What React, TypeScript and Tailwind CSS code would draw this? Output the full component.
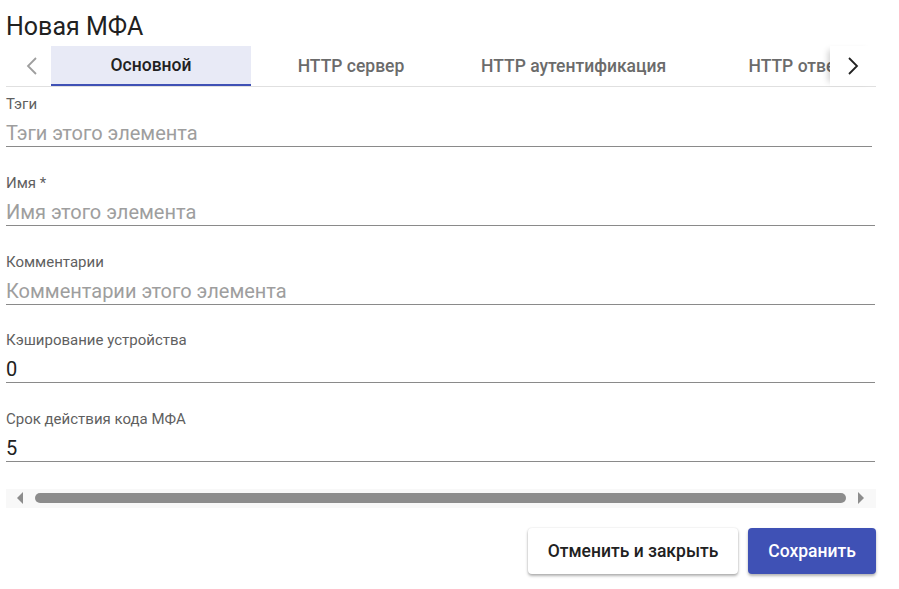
import React from "react";

const fields = [
  { label: "Тэги", placeholder: "Тэги этого элемента", value: "", w: "w-[866px]" },
  { label: "Имя *", placeholder: "Имя этого элемента", value: "", w: "w-[869px]" },
  { label: "Комментарии", placeholder: "Комментарии этого элемента", value: "", w: "w-[869px]" },
  { label: "Кэширование устройства", placeholder: "", value: "0", w: "w-[869px]" },
  { label: "Срок действия кода МФА", placeholder: "", value: "5", w: "w-[869px]" },
];

const tabs = ["Основной", "HTTP сервер", "HTTP аутентификация", "HTTP ответ"];

export default function App() {
  return (
    <div
      className="w-[899px] h-[589px] bg-white text-[#212121] overflow-hidden"
      style={{ fontFamily: "Roboto, 'Noto Sans', sans-serif" }}
    >
      <div className="pl-[6px] pr-[23px]">
        <h1 className="text-[25px] leading-[30px] pt-[12px] h-[46px] font-normal">Новая МФА</h1>

        <div className="flex h-[41px] border-b border-[#e0e0e0]">
          <div className="w-[45px] flex items-center justify-center shrink-0">
            <svg width="14" height="20" viewBox="0 0 14 20" className="ml-[6px]">
              <path d="M11 2 L3 10 L11 18" fill="none" stroke="#9e9e9e" strokeWidth="1.8" />
            </svg>
          </div>
          <div className="flex-1 overflow-hidden flex">
            {tabs.map((t, i) => (
              <div
                key={t}
                className={
                  i === 0
                    ? "min-w-[200px] px-[30px] shrink-0 flex items-center justify-center text-[17.5px] font-medium text-[#212121] bg-[#e8eaf6] border-b-2 border-[#3f51b5]"
                    : "min-w-[200px] px-[30px] shrink-0 flex items-center justify-center text-[17.5px] font-medium text-[#6b6b6b]"
                }
              >
                {t}
              </div>
            ))}
          </div>
          <div className="w-[46px] shrink-0 flex items-center justify-center bg-white shadow-[-6px_0_6px_-4px_rgba(0,0,0,0.18)]">
            <svg width="14" height="20" viewBox="0 0 14 20">
              <path d="M3 2 L11 10 L3 18" fill="none" stroke="#212121" strokeWidth="1.8" />
            </svg>
          </div>
        </div>

        <div className="flex flex-col">
          {fields.map((f) => (
            <div key={f.label} className="h-[78.75px] pt-[8px]">
              <div className="text-[15px] leading-[18px] text-[#5f5f5f]">{f.label}</div>
              <div
                className={`${f.w} mt-[8px] h-[26px] border-b border-[#8a8a8a] text-[20px] leading-[24px] ${
                  f.value ? "text-[#212121]" : "text-[#9e9e9e]"
                }`}
              >
                {f.value || f.placeholder}
              </div>
            </div>
          ))}
        </div>

        <div className="mt-[8px] h-[19px] bg-[#f8f8f8] flex items-center pl-[11px] pr-[12px]">
          <svg width="6" height="12" viewBox="0 0 6 12">
            <path d="M6 0 L0 6 L6 12 Z" fill="#8c8c8c" />
          </svg>
          <div className="flex-1 mx-[12px] h-[10px] rounded-full bg-[#8c8c8c]" />
          <svg width="6" height="12" viewBox="0 0 6 12">
            <path d="M0 0 L6 6 L0 12 Z" fill="#8c8c8c" />
          </svg>
        </div>

        <div className="flex justify-end gap-[10px] mt-[20px]">
          <button className="h-[46px] w-[210px] rounded-[4px] bg-white text-[17.5px] font-medium text-[#212121] shadow-[0_2px_3px_rgba(0,0,0,0.3),0_0_2px_rgba(0,0,0,0.12)]">
            Отменить и закрыть
          </button>
          <button className="h-[46px] w-[128px] rounded-[4px] bg-[#3f51b5] text-[17.5px] font-medium text-white shadow-[0_2px_3px_rgba(0,0,0,0.3)]">
            Сохранить
          </button>
        </div>
      </div>
    </div>
  );
}
